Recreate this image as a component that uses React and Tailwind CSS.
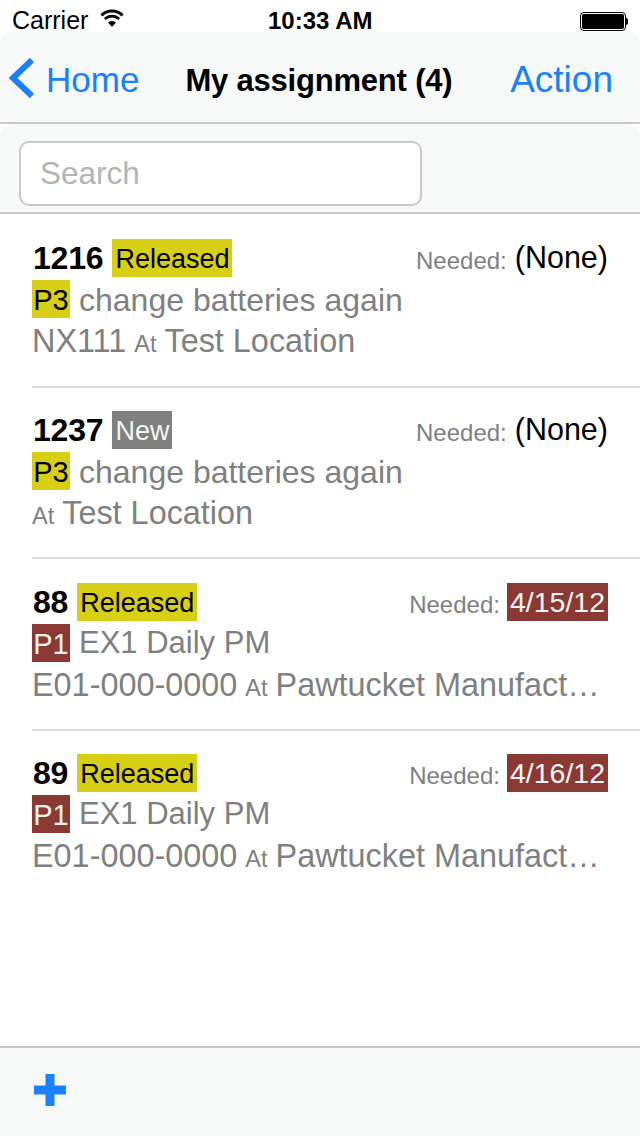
import React from "react";

const YELLOW = "bg-[#d6cf14] text-black";
const RED = "bg-[#8b3a33] text-[#f5f5f5]";
const GREY = "bg-[#808080] text-[#f5f5f5]";

const rows = [
  { id: "1216", status: "Released", statusCls: YELLOW, needed: "(None)", pri: "P3", priCls: YELLOW, title: "change batteries again", titleCls: "text-[32px]", asset: "NX111", loc: "Test Location", h: "h-[174px] pt-[25px]" },
  { id: "1237", status: "New", statusCls: GREY, needed: "(None)", pri: "P3", priCls: YELLOW, title: "change batteries again", titleCls: "text-[32px]", asset: "", loc: "Test Location", h: "h-[171px] pt-[23px]" },
  { id: "88", status: "Released", statusCls: YELLOW, needed: "4/15/12", neededCls: RED, pri: "P1", priCls: RED, title: "EX1 Daily PM", titleCls: "text-[31px]", asset: "E01-000-0000", loc: "Pawtucket Manufact…", h: "h-[172px] pt-[24px]" },
  { id: "89", status: "Released", statusCls: YELLOW, needed: "4/16/12", neededCls: RED, pri: "P1", priCls: RED, title: "EX1 Daily PM", titleCls: "text-[31px]", asset: "E01-000-0000", loc: "Pawtucket Manufact…", h: "h-[171px] pt-[23px]", last: true },
];

const Row = ({ r }) => (
  <div className={`ml-8 shrink-0 ${r.h} ${r.last ? "" : "border-b-2 border-[#dcdcdc]"}`}>
    <div className="flex items-center h-[38px] pr-[32px]">
      <span className="text-[32px] font-bold text-black tracking-[-0.2px] pl-[1px]">{r.id}</span>
      <span className={`ml-[9px] h-[38px] flex items-center px-[3px] pt-[3px] text-[27px] ${r.statusCls}`}>{r.status}</span>
      <span className={`ml-auto text-[24px] text-[#808080] mt-[6px] ${r.neededCls ? "mr-[7px]" : "mr-[8px]"}`}>Needed:</span>
      {r.neededCls ? (
        <span className={`h-[38px] flex items-center px-[3px] pt-[1px] text-[28.5px] ${r.neededCls}`}>{r.needed}</span>
      ) : (
        <span className="text-[30.5px] text-black">{r.needed}</span>
      )}
    </div>
    <div className="flex items-center h-[38px] mt-[3px]">
      <span className={`h-[38px] w-[38px] flex items-center justify-center pt-[3px] text-[29px] ${r.priCls}`}>{r.pri}</span>
      <span className={`ml-[9px] text-[#808080] mt-[1px] ${r.titleCls}`}>{r.title}</span>
    </div>
    <div className="flex items-baseline h-[38px] mt-[-1px] text-[32.4px] text-[#808080] whitespace-nowrap">
      {r.asset && <span className="mr-[8px]">{r.asset}</span>}
      <span className="text-[23.5px] mr-[8px]">At</span>
      <span>{r.loc}</span>
    </div>
  </div>
);

export default function App() {
  return (
    <div className="w-[640px] h-[1136px] flex flex-col bg-white overflow-hidden font-['Liberation_Sans',sans-serif]">
      {/* status bar */}
      <div className="h-[32px] shrink-0 flex items-center justify-between pl-[12px] pr-[12px] pt-[9px] text-black relative">
        <div className="flex items-center gap-[12px] text-[25px]">
          <span>Carrier</span>
          <svg className="mt-[-6px]" width="24" height="18" viewBox="0 0 24 18" fill="black">
            <path d="M12 18 L8 13.5 A6 6 0 0 1 16 13.5 Z" />
            <path d="M5.8 11 L3.9 9 A11.5 11.5 0 0 1 20.1 9 L18.2 11 A8.8 8.8 0 0 0 5.8 11 Z" />
            <path d="M2.4 7.4 L0.4 5.3 A16.5 16.5 0 0 1 23.6 5.3 L21.6 7.4 A13.6 13.6 0 0 0 2.4 7.4 Z" />
          </svg>
        </div>
        <span className="absolute left-[268px] top-[3px] text-[24px] font-bold">10:33 AM</span>
        <div className="flex items-center mt-[-9px] pt-[10px]">
          <div className="w-[46px] h-[19px] rounded-[4px] border border-black p-[1px]">
            <div className="w-full h-full rounded-[2px] bg-black" />
          </div>
          <div className="w-[2px] h-[7px] bg-black rounded-r-full" />
        </div>
      </div>

      {/* nav bar */}
      <div className="h-[92px] shrink-0 bg-[#f7f8f8] rounded-t-[12px] border-b-2 border-[#c8c8c8] flex items-center pt-[6px]">
        <svg className="ml-[7px] mt-[-4px]" width="28" height="42" viewBox="0 0 28 42" fill="none">
          <path d="M25 3 L6 21 L25 39" stroke="#1a80fb" strokeWidth="6" />
        </svg>
        <span className="ml-[11px] text-[35px] text-[#1a80fb]">Home</span>
        <span className="ml-[46px] mt-[3px] text-[31px] font-bold text-black tracking-[-0.2px]">My assignment (4)</span>
        <span className="ml-auto mr-[27px] text-[37px] text-[#1a80fb]">Action</span>
      </div>

      {/* search bar */}
      <div className="h-[90px] shrink-0 bg-[#f7f8f8] rounded-t-[12px] border-b-2 border-[#c8c8c8] pl-[19px] pt-[17px]">
        <div className="w-[403px] h-[65px] bg-white border-2 border-[#c8c8c8] rounded-[10px] flex items-center pl-[19px] text-[31.5px] text-[#b4b4b4]">
          Search
        </div>
      </div>

      {/* list */}
      <div className="flex-1 flex flex-col min-h-0">
        {rows.map((r) => (
          <Row key={r.id} r={r} />
        ))}
      </div>

      {/* toolbar */}
      <div className="h-[90px] shrink-0 bg-[#f7f8f8] border-t-2 border-[#c8c8c8] pl-[34px] pt-[26px]">
        <svg width="32" height="32" viewBox="0 0 32 32" fill="#1a80fb">
          <path d="M11.5 0 H20.5 V11.5 H32 V20.5 H20.5 V32 H11.5 V20.5 H0 V11.5 H11.5 Z" />
        </svg>
      </div>
    </div>
  );
}
